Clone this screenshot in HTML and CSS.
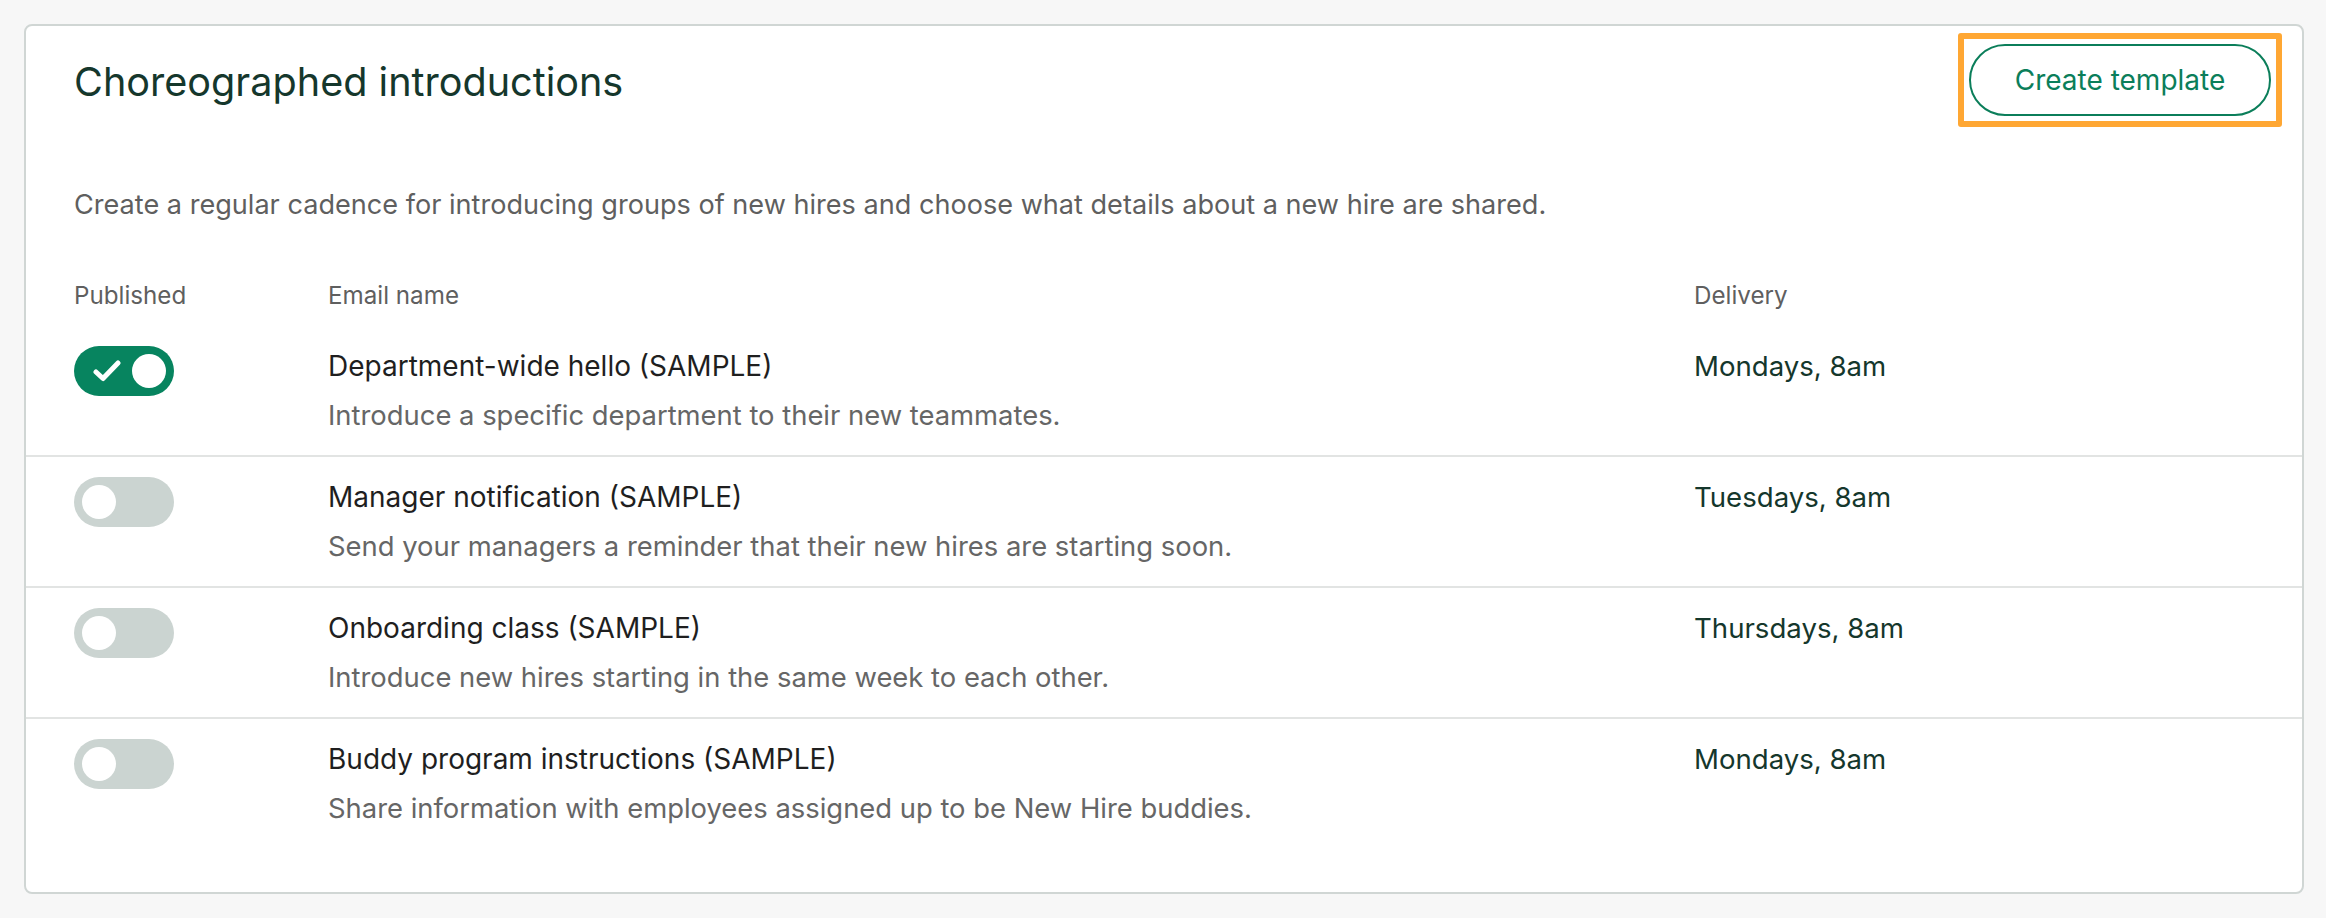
FILE: index.html
```html
<!DOCTYPE html>
<html lang="en">
<head>
<meta charset="utf-8">
<title>Choreographed introductions</title>
<link rel="stylesheet" href="styles.css">
</head>
<body>
<section class="card">
  <header class="card-head">
    <h1 class="title">Choreographed introductions</h1>
    <span class="highlight"><button class="btn-outline" type="button">Create template</button></span>
  </header>
  <p class="intro">Create a regular cadence for introducing groups of new hires and choose what details about a new hire are shared.</p>
  <div class="table">
    <div class="row head-row">
      <div class="col-h">Published</div>
      <div class="col-h">Email name</div>
      <div class="col-h">Delivery</div>
    </div>
    <div class="row item">
      <div><span class="toggle on"><svg class="check" width="28" height="24" viewBox="0 0 28 24"><path d="M3 13 L10 19.5 L25 4" fill="none" stroke="#fff" stroke-width="5" stroke-linecap="round" stroke-linejoin="round"/></svg><span class="knob"></span></span></div>
      <div><div class="name">Department-wide hello (SAMPLE)</div><div class="desc">Introduce a specific department to their new teammates.</div></div>
      <div class="when">Mondays, 8am</div>
    </div>
    <div class="row item">
      <div><span class="toggle"><span class="knob"></span></span></div>
      <div><div class="name">Manager notification (SAMPLE)</div><div class="desc">Send your managers a reminder that their new hires are starting soon.</div></div>
      <div class="when">Tuesdays, 8am</div>
    </div>
    <div class="row item">
      <div><span class="toggle"><span class="knob"></span></span></div>
      <div><div class="name">Onboarding class (SAMPLE)</div><div class="desc">Introduce new hires starting in the same week to each other.</div></div>
      <div class="when">Thursdays, 8am</div>
    </div>
    <div class="row item last">
      <div><span class="toggle"><span class="knob"></span></span></div>
      <div><div class="name">Buddy program instructions (SAMPLE)</div><div class="desc">Share information with employees assigned up to be New Hire buddies.</div></div>
      <div class="when">Mondays, 8am</div>
    </div>
  </div>
</section>
</body>
</html>
```
FILE: styles.css
```css
* { box-sizing: border-box; }
html, body { margin: 0; }
body {
  background: #f7f7f7;
  padding: 24px 22px 24px 24px;
  font-family: Inter, "Liberation Sans", Arial, sans-serif;
  color: #222;
}
.card {
  background: #fff;
  border: 2px solid #d0d6d4;
  border-radius: 8px;
  padding: 7px 0 44px 0;
}
.card-head {
  display: flex;
  justify-content: space-between;
  align-items: center;
  padding: 0 20px 0 48px;
}
.title {
  margin: 0;
  padding-top: 3px;
  font-size: 39.6px;
  font-weight: 400;
  color: #15372c;
  line-height: 48px;
}
.highlight {
  display: inline-flex;
  border: 6px solid #ffa733;
  border-radius: 3px;
  padding: 5px;
}
.btn-outline {
  width: 302px;
  height: 72px;
  border: 2px solid #0b7e5a;
  border-radius: 36px;
  background: #fff;
  color: #0b7e5a;
  font-family: inherit;
  font-size: 28px;
  padding: 0;
}
.intro {
  margin: 58px 0 0 0;
  padding-left: 48px;
  font-size: 27.1px;
  line-height: 40px;
  color: #5f5f5f;
}
.table { margin-top: 55px; }
.row {
  display: grid;
  grid-template-columns: 254px 1366px 1fr;
  padding-left: 48px;
}
.head-row {
  font-size: 24.2px;
  line-height: 32px;
  color: #5f5f5f;
  margin-bottom: 14px;
}
.item {
  padding-top: 20px;
  padding-bottom: 20px;
  border-bottom: 2px solid #e2e4e3;
}
.item.last { border-bottom: 0; }
.toggle {
  display: flex;
  align-items: center;
  justify-content: space-between;
  width: 100px;
  height: 50px;
  border-radius: 25px;
  background: #cbd4d1;
  padding: 0 8px;
}
.toggle.on { background: #07845f; }
.check { display: block; margin-left: 11px; }
.knob {
  width: 34px;
  height: 34px;
  border-radius: 50%;
  background: #fff;
}
.name {
  font-size: 28px;
  line-height: 40px;
  color: #1f1f1f;
}
.desc {
  margin-top: 9px;
  font-size: 27.4px;
  line-height: 40px;
  color: #666;
}
.when {
  font-size: 27.6px;
  line-height: 40px;
  color: #15372c;
}
```
